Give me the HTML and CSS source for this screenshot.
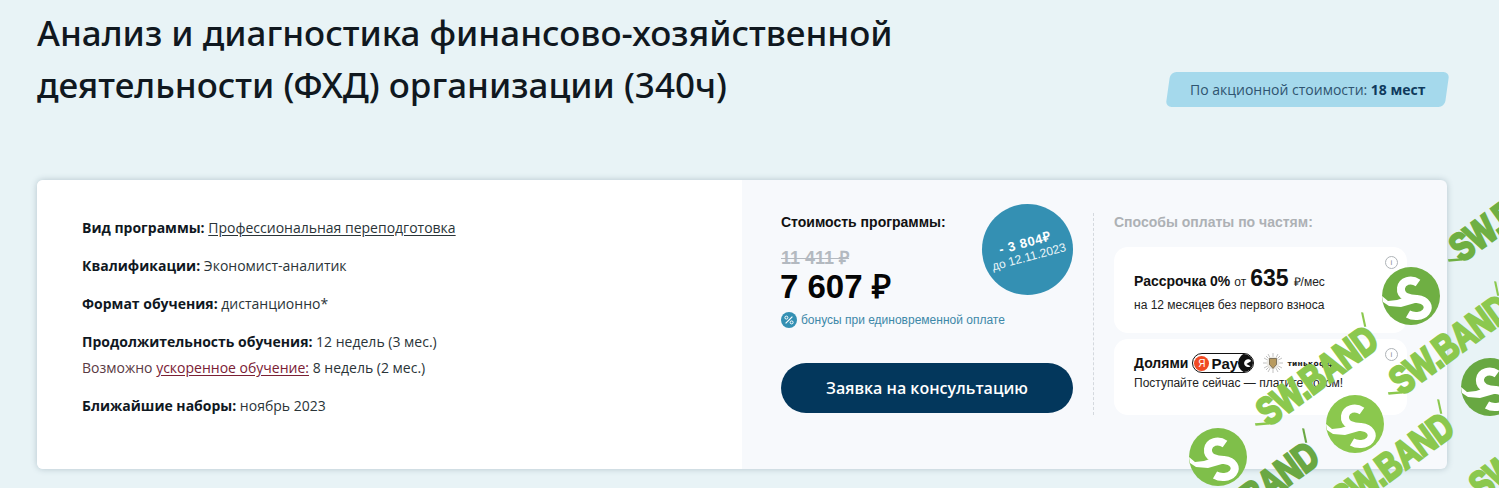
FILE: index.html
```html
<!DOCTYPE html>
<html lang="ru">
<head>
<meta charset="utf-8">
<title>Анализ и диагностика ФХД</title>
<link rel="stylesheet" href="styles.css">
</head>
<body>
<svg class="sprite" width="0" height="0" aria-hidden="true">
  <symbol id="swlogo" viewBox="0 0 60 60">
    <circle cx="30" cy="30" r="29"/>
    <path class="sw-s" d="M37 17 C30 12 21 15 20 22 C19 31 29 33 36 33 C46 34 49 41 45 46 C41 51 32 51 27 48"/>
    <path class="sw-h" d="M1 30 L7 35 L16 34 L28 30 L34 37 L20 41 L8 40 L2 36 Z"/>
  </symbol>
</svg>
<main class="page">
  <header class="head">
    <h1 class="title">Анализ и диагностика финансово-хозяйственной деятельности (ФХД) организации (340ч)</h1>
    <div class="promo"><span class="promo-text">По акционной стоимости: <b>18 мест</b></span></div>
  </header>
  <section class="card">
    <div class="info">
      <p class="row"><b>Вид программы:</b> <a class="link" href="#">Профессиональная переподготовка</a></p>
      <p class="row"><b>Квалификации:</b> Экономист-аналитик</p>
      <p class="row"><b>Формат обучения:</b> дистанционно*</p>
      <div class="row">
        <p class="line"><b>Продолжительность обучения:</b> 12 недель (3 мес.)</p>
        <p class="line line-sub"><span class="muted">Возможно <a class="link link-red" href="#">ускоренное обучение:</a></span> 8 недель (2 мес.)</p>
      </div>
      <p class="row"><b>Ближайшие наборы:</b> ноябрь 2023</p>
    </div>
    <div class="side">
      <div class="price">
        <div class="price-label">Стоимость программы:</div>
        <div class="price-old">11 411 ₽</div>
        <div class="price-new">7 607 ₽</div>
        <div class="bonus">
          <svg class="bonus-icon" viewBox="0 0 16 16"><circle cx="8" cy="8" r="8"/><path d="M4.6 11.4 11.4 4.6"/><circle class="o" cx="5.4" cy="5.6" r="1.5"/><circle class="o" cx="10.6" cy="10.4" r="1.5"/></svg>
          <span>бонусы при единовременной оплате</span>
        </div>
        <a class="cta" href="#">Заявка на консультацию</a>
        <div class="sale"><div class="sale-in"><b>- 3 804₽</b><span>до 12.11.2023</span></div></div>
      </div>
      <div class="pay">
        <div class="pay-title">Способы оплаты по частям:</div>
        <div class="pay-card pay-card-a">
          <span class="i">i</span>
          <div class="p1"><b>Рассрочка 0%</b> от <strong>635</strong> ₽/мес</div>
          <div class="p2">на 12 месяцев без первого взноса</div>
        </div>
        <div class="pay-card pay-card-b">
          <span class="i">i</span>
          <div class="p3">
            <b>Долями</b>
            <span class="ypay"><span class="ya">Я</span><span class="yp">Pay</span><span class="yc"><svg viewBox="0 0 12 12"><path d="M11 2.6 4.5 6.5 10 9.6A5.2 5.2 0 1 1 11 2.6Z"/></svg></span></span>
            <span class="tk">
              <svg class="tk-icon" viewBox="0 0 20 20"><path d="M10 0v20M0 10h20M3 3l14 14M17 3 3 17M5 1l10 18M15 1 5 19M1 5l18 10M19 5 1 15"/><circle cx="10" cy="10" r="6.5"/><path class="tk-s" d="M6.5 5.5h7v6l-3.5 4-3.5-4Z"/></svg>
              <span class="tk-t">тинькофф</span>
            </span>
          </div>
          <div class="p4">Поступайте сейчас — платите потом!</div>
        </div>
      </div>
    </div>
  </section>
</main>
<div class="wm" aria-hidden="true">
  <svg class="wm-c wm-c1"><use href="#swlogo"/></svg>
  <svg class="wm-c wm-c2"><use href="#swlogo"/></svg>
  <svg class="wm-c wm-c3"><use href="#swlogo"/></svg>
  <svg class="wm-c wm-c4"><use href="#swlogo"/></svg>
  <span class="wm-t wm-t1">SW.BAND</span>
  <span class="wm-t wm-t2">SW.BAND</span>
  <span class="wm-t wm-t3">SW.BAND</span>
  <span class="wm-t wm-t4">SW.BAND</span>
  <span class="wm-t wm-t5">SW.BAND</span>
  <span class="wm-t wm-t6">SW.BAND</span>
</div>
</body>
</html>
```
FILE: styles.css
```css
* { box-sizing: border-box; }
html, body { margin: 0; height: 488px; overflow: hidden; }
body { background: #e8f3f6; font-family: "Open Sans", sans-serif; color: #1c2a33; position: relative; }
.sprite { position: absolute; }
p { margin: 0; }
.page { padding: 7px 52px 0 37px; }
.head { display: flex; justify-content: space-between; align-items: flex-start; height: 173px; }
.title { margin: 0; width: 880px; font-family: "Noto Sans", sans-serif; font-weight: 500; font-size: 35px; line-height: 52px; color: #10181f; }
.promo { margin-top: 65px; width: 279px; height: 35px; background: #a5d9ec; border-radius: 6px; transform: skewX(-8deg); display: flex; align-items: center; justify-content: center; }
.promo-text { transform: skewX(8deg); font-size: 14px; color: #2f5470; }
.promo-text b { color: #0f3a5c; }
.card { display: flex; height: 289px; border-radius: 6px; overflow: hidden; box-shadow: 0 0 6px rgba(60,90,110,.3); background: #f7f9fc; }
.info { width: 705px; background: #fff; padding: 35px 0 0 45px; font-size: 14px; line-height: 26px; color: #2a3438; }
.info b { color: #10181f; }
.row { margin-bottom: 12px; }
.line-sub { color: #2a3438; }
.muted { color: #5a3a44; }
.link { color: inherit; text-decoration: underline; text-underline-offset: 2px; }
.link-red { color: #7a2034; }
.side { flex: 1; display: flex; font-family: "Liberation Sans", Arial, sans-serif; }
.price { position: relative; width: 351px; padding: 33px 0 0 39px; }
.price-label { font-size: 14px; font-weight: 700; line-height: 18px; color: #111; }
.price-old { margin-top: 18px; font-size: 18px; font-weight: 700; line-height: 18px; color: #b3b9c0; text-decoration: line-through; }
.price-new { margin-top: 1px; margin-left: -1px; font-size: 33px; font-weight: 700; line-height: 38px; color: #050505; }
.bonus { margin-top: 6px; display: flex; align-items: center; gap: 4px; font-size: 12px; line-height: 16px; color: #3d88a8; }
.bonus-icon { width: 16px; height: 16px; fill: #3490b3; }
.bonus-icon path { stroke: #fff; stroke-width: 1.2; }
.bonus-icon .o { fill: none; stroke: #fff; stroke-width: 1; }
.cta { margin-top: 35px; display: flex; align-items: center; justify-content: center; width: 292px; height: 50px; border-radius: 25px; background: #03375c; color: #fff; font-family: "Open Sans", sans-serif; font-size: 16px; font-weight: 600; text-decoration: none; }
.sale { position: absolute; left: 240px; top: 24px; width: 91px; height: 91px; border-radius: 50%; background: #3490b3; color: #fff; display: flex; align-items: center; justify-content: center; }
.sale-in { transform: rotate(-15deg); display: flex; flex-direction: column; align-items: center; font-size: 12px; line-height: 15px; color: #e8f4f8; }
.sale-in b { font-size: 13px; letter-spacing: .7px; color: #fff; }
.pay { margin-top: 33px; width: 322px; height: 202px; border-left: 1px dashed #d4d9de; padding-left: 20px; }
.pay-title { font-size: 14px; font-weight: 700; line-height: 18px; color: #adb1b5; }
.pay-card { position: relative; width: 293px; background: #fff; border-radius: 14px; padding-left: 20px; }
.pay-card-a { margin-top: 16px; height: 86px; padding-top: 18px; }
.pay-card-b { margin-top: 6px; height: 76px; padding-top: 14px; }
.i { position: absolute; right: 9px; top: 9px; width: 13px; height: 13px; border: 1px solid #aeb3b7; border-radius: 50%; font-size: 8px; line-height: 11px; text-align: center; color: #8d9296; }
.p1 { display: flex; align-items: baseline; gap: 4px; font-size: 12px; line-height: 26px; color: #222; }
.p1 b { font-size: 14px; color: #111; }
.p1 strong { font-size: 23px; color: #111; margin: 0 1px 0 0; }
.p2 { font-size: 12px; line-height: 20px; color: #222; }
.p3 { display: flex; align-items: center; height: 20px; font-size: 14px; color: #111; }
.ypay { margin-left: 4px; display: flex; align-items: center; width: 62px; height: 20px; flex: none; border: 1.5px solid #111; border-radius: 10px; background: #fff; overflow: hidden; }
.ya { margin-left: 1px; width: 15px; height: 15px; flex: none; border-radius: 50%; background: #f04a23; color: #fff; font-size: 10px; line-height: 15px; text-align: center; }
.yp { margin-left: 2px; font-size: 15px; font-weight: 700; color: #111; line-height: 17px; }
.yc { margin-left: auto; width: 18px; height: 20px; flex: none; background: #111; border-radius: 10px 0 0 10px; display: flex; align-items: center; justify-content: center; }
.yc svg { width: 9px; height: 9px; fill: #fff; }
.tk { margin-left: 9px; display: flex; align-items: center; gap: 4px; }
.tk-icon { width: 20px; height: 20px; flex: none; }
.tk-icon circle { fill: #eceae4; }
.tk-icon path { stroke: #a8a8a8; stroke-width: .7; }
.tk-icon .tk-s { fill: #b89a5e; stroke: #5c5240; }
.tk-t { font-family: "DejaVu Sans", sans-serif; font-size: 7.5px; font-weight: 700; letter-spacing: .3px; color: #222; white-space: nowrap; }
.p4 { margin-top: 2px; font-size: 12px; line-height: 16px; color: #222; }
.wm { position: absolute; inset: 0; pointer-events: none; overflow: hidden; }
.wm-c { position: absolute; width: 60px; height: 60px; fill: #7fbf4a; }
.sw-s { fill: none; stroke: #fff; stroke-width: 8; }
.sw-h { fill: #fff; }
.wm-c1 { left: 1381px; top: 266px; fill: #6faf43; }
.wm-c2 { left: 1325px; top: 394px; fill: #8bc84e; }
.wm-c3 { left: 1188px; top: 427px; fill: #7fbf4a; }
.wm-c4 { left: 1460px; top: 357px; fill: #68a842; }
.wm-t { position: absolute; font-family: "Liberation Sans", sans-serif; font-weight: 700; font-size: 30px; line-height: 36px; letter-spacing: -.5px; color: #8bc84e; transform: translate(-50%, -50%) rotate(-36deg) scaleY(1.3); white-space: nowrap; -webkit-text-stroke: 2px currentColor; }
.wm-t::before { content: ""; position: absolute; left: -10px; top: 22px; width: 13px; height: 2px; background: currentColor; transform: rotate(25deg); }
.wm-t::after { content: ""; position: absolute; right: -3px; top: -2px; width: 2px; height: 12px; background: currentColor; transform: rotate(30deg); }
.wm-t1 { left: 1317px; top: 376px; }
.wm-t2 { left: 1510px; top: 212px; color: #6faf43; }
.wm-t3 { left: 1450px; top: 345px; }
.wm-t4 { left: 1393px; top: 463px; }
.wm-t5 { left: 1258px; top: 492px; color: #6aa843; }
.wm-t6 { left: 1530px; top: 450px; }
```
